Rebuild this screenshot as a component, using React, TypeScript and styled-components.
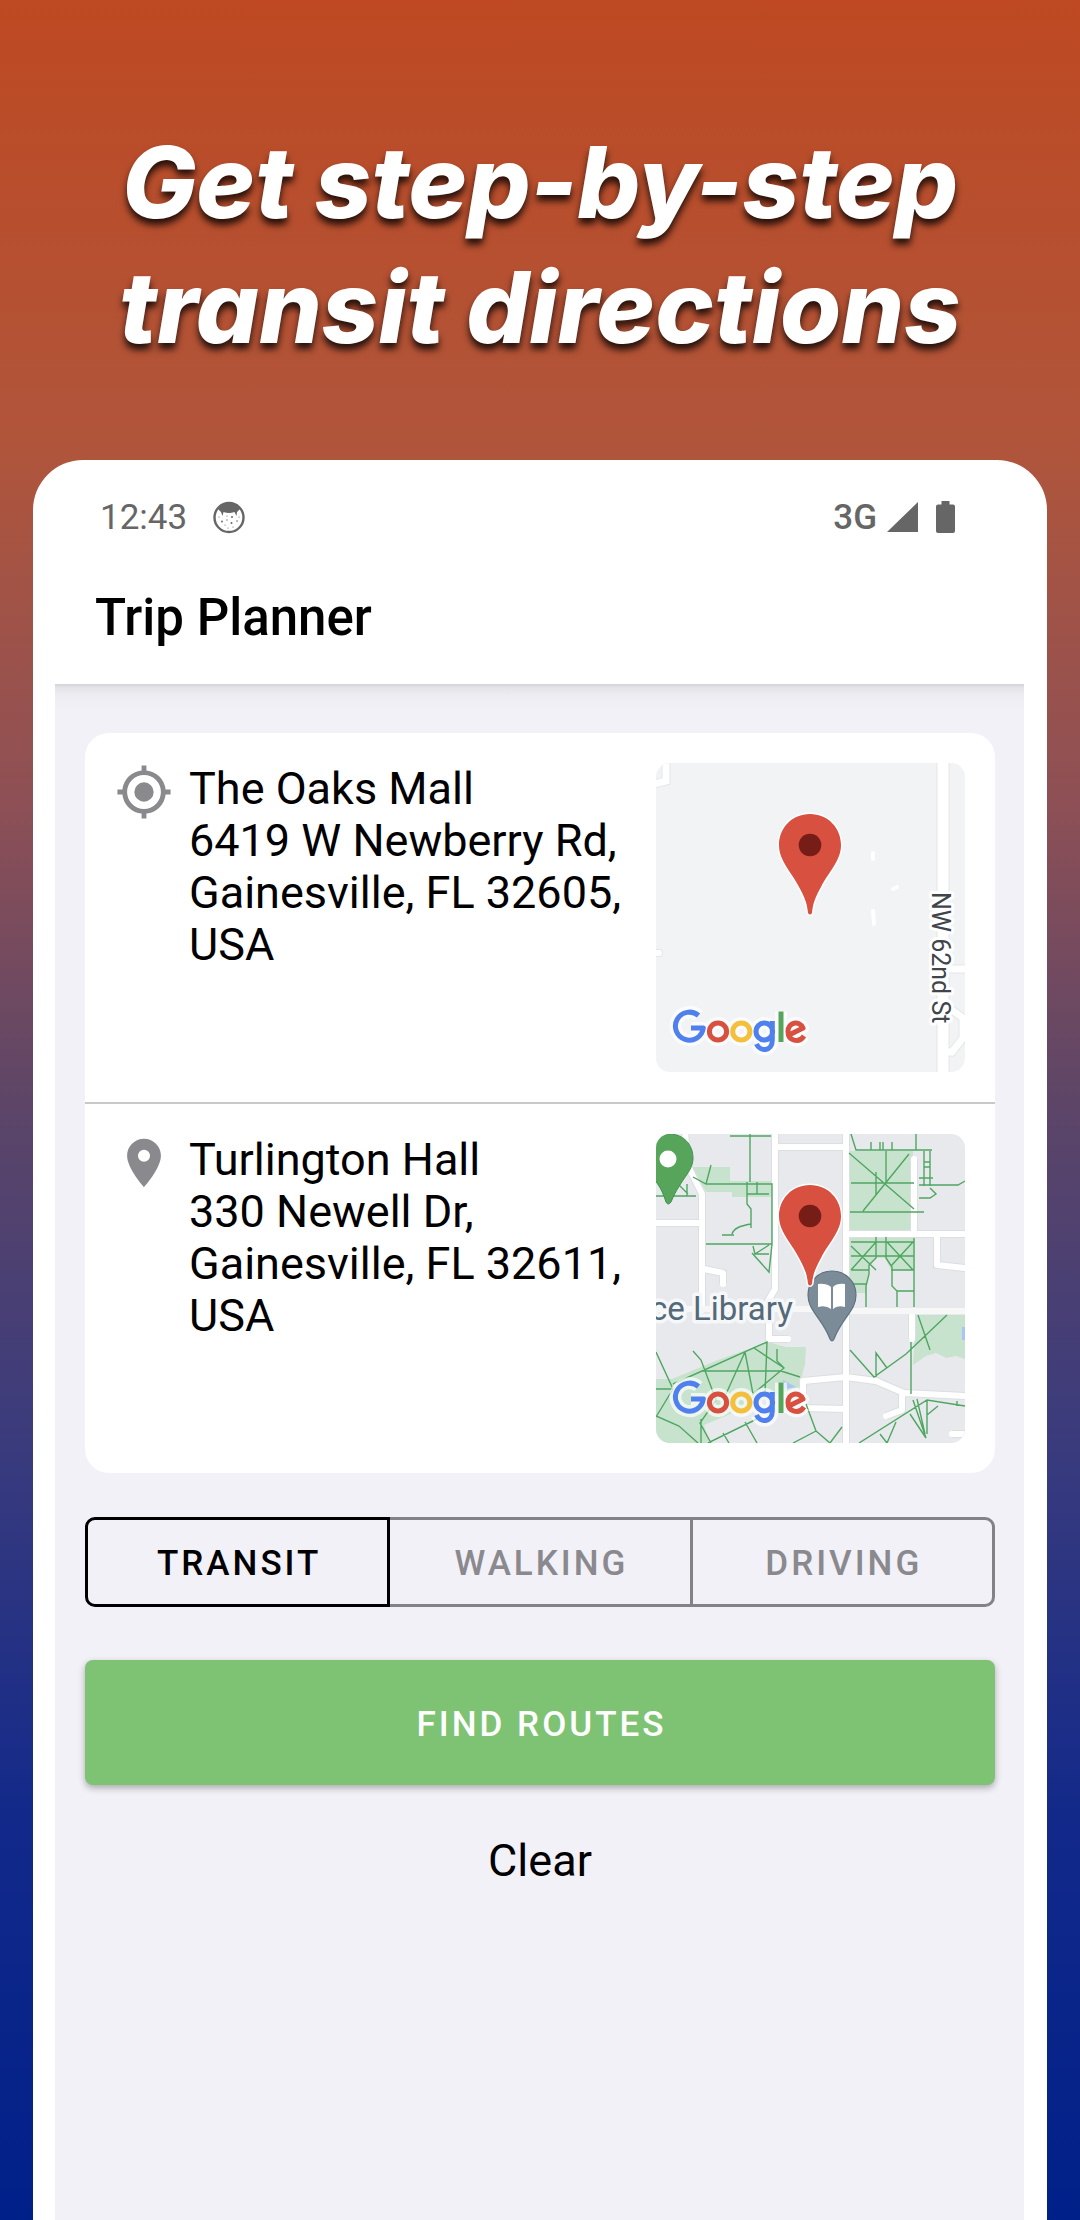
import React from "react";
import styled, { createGlobalStyle } from "styled-components";

const GlobalStyle = createGlobalStyle`
  * { box-sizing: border-box; }
  body { margin: 0; font-family: Roboto, "Liberation Sans", sans-serif; color: #000; }
  button { font: inherit; color: inherit; background: none; border: 0; padding: 0; margin: 0; cursor: pointer; }
`;

const Page = styled.div`
  min-height: 100vh;
  display: flex;
  flex-direction: column;
  background: linear-gradient(180deg, #be4922 0%, #b0553b 20%, #8e5055 36%, #5c4568 50%, #3a3b7d 65%, #12298a 82%, #002089 100%);
`;

const Headline = styled.h1`
  margin: 0;
  padding: 120px 32px 90px;
  font: italic 800 99px/125px Inter, "Liberation Sans", sans-serif;
  color: #fff;
  text-align: center;
  text-shadow: 0 6px 7px rgba(0, 0, 0, 0.8);
`;

const Phone = styled.main`
  flex: 1;
  display: flex;
  flex-direction: column;
  margin: 0 33px;
  border-radius: 50px 50px 0 0;
  background: #fff;
`;

const StatusBar = styled.div`
  display: flex;
  justify-content: space-between;
  align-items: center;
  height: 60px;
  margin: 27px 92px 0 67px;
  color: #666;
  font-size: 35px;
`;

const StatusGroup = styled.div<{ $gap: number }>`
  display: flex;
  align-items: center;
  gap: ${(p) => p.$gap}px;
`;

const Network = styled.span`
  font-weight: 500;
`;

const TitleBar = styled.header`
  padding: 43px 62px 38px;
`;

const Title = styled.h2`
  margin: 0;
  font-size: 51px;
  line-height: 56px;
  font-weight: 500;
`;

const Screen = styled.div`
  flex: 1;
  display: flex;
  flex-direction: column;
  margin: 0 23px 0 22px;
  padding: 49px 29px 49px 30px;
  background: linear-gradient(180deg, #d3d3d8 0, #e4e4e9 4px, #eeedf3 12px, #f2f1f7 28px);
`;

const Card = styled.section`
  border-radius: 24px;
  background: #fff;
`;

const Place = styled.div`
  display: flex;
  align-items: flex-start;
  padding: 30px;

  & + & { border-top: 2px solid #c8c8ca; }
`;

const PlaceIcon = styled.svg`
  flex: none;
  width: 58px;
  height: 58px;
  fill: #8a898e;
`;

const Address = styled.p`
  flex: 1;
  min-width: 0;
  margin: 0 20px 0 16px;
  font-size: 45px;
  line-height: 52px;
`;

const MapPicture = styled.svg`
  flex: none;
  width: 309px;
  height: 309px;
  border-radius: 14px;
`;

const Modes = styled.div`
  display: flex;
  margin-top: 44px;
`;

const Mode = styled.button<{ $active?: boolean }>`
  flex: 1;
  height: 90px;
  padding: 2px 0 0 3px;
  border: 3px solid ${(p) => (p.$active ? "#000" : "#838287")};
  color: ${(p) => (p.$active ? "#000" : "#8a898e")};
  font-size: 35px;
  font-weight: 500;
  letter-spacing: 3px;

  & + & { border-left: 0; }
  &:first-child { border-radius: 10px 0 0 10px; }
  &:last-child { border-radius: 0 10px 10px 0; }
`;

const FindButton = styled.button`
  height: 125px;
  margin-top: 53px;
  padding: 4px 0 0 3px;
  border-radius: 8px;
  background: #7ec373;
  box-shadow: 0 3px 7px rgba(0, 0, 0, 0.3);
  color: #fff;
  font-size: 35px;
  font-weight: 500;
  letter-spacing: 3px;
`;

const ClearButton = styled.button`
  align-self: center;
  margin-top: 50px;
  font-size: 45px;
  line-height: 52px;
`;

function FaceIcon() {
  return (
    <svg width="32" height="33" viewBox="0 0 32 33" aria-hidden="true">
      <circle cx="16" cy="16.500" r="14.500" fill="none" stroke="#666" strokeWidth="2.400" />
      <path d="M5 8 Q9 2 16 2 Q23 2 27 8 L24 11 L23.500 15 L21.500 11 Q16 13 10.500 11 L9.500 15 L8 11 Z" fill="#666" />
      <g fill="#666">
        <circle cx="9" cy="20.500" r=".9" /><circle cx="14" cy="19" r=".7" /><circle cx="18.500" cy="22" r="1" />
        <circle cx="24" cy="20" r=".8" /><circle cx="19" cy="16" r="1" /><circle cx="12" cy="24" r=".6" />
        <circle cx="20" cy="26" r=".6" /><circle cx="6" cy="16" r=".6" /><circle cx="26" cy="16" r=".6" />
        <circle cx="15" cy="27" r=".6" /><circle cx="14" cy="15" r=".6" />
      </g>
    </svg>
  );
}

function SignalIcon() {
  return (
    <svg width="31" height="32" viewBox="0 0 31 32" aria-hidden="true">
      <path d="M31 1 V31 H0 Z" fill="#666" />
    </svg>
  );
}

function BatteryIcon() {
  return (
    <svg width="19" height="32" viewBox="0 0 19 32" aria-hidden="true">
      <path d="M5.500 0 H13.500 V3.500 H17 Q19 3.500 19 5.500 V30 Q19 32 17 32 H2 Q0 32 0 30 V5.500 Q0 3.500 2 3.500 H5.500 Z" fill="#666" />
    </svg>
  );
}

function RedPin() {
  return (
    <g>
      <path
        d="M154 51 C136 51 123 65 123 82 C123 98 135 108 143 124 C149 135 151 140 152 150 Q154 153 156 150 C157 140 159 135 165 124 C173 108 185 98 185 82 C185 65 172 51 154 51 Z"
        fill="#d8503f" stroke="#fff" strokeWidth="3" paintOrder="stroke"
      />
      <circle cx="154" cy="82" r="11.300" fill="#761d17" />
    </g>
  );
}

const logoStrokes = [
  { color: "#4f80ee", d: "M42.500 252.500 A14 14 0 1 0 47.300 265 H35" },
  { color: "#d8503f", d: "M53.400 268.500 a8.600 8.600 0 1 0 17.200 0 a8.600 8.600 0 1 0 -17.200 0" },
  { color: "#f3bf3c", d: "M76.700 268.500 a8.600 8.600 0 1 0 17.200 0 a8.600 8.600 0 1 0 -17.200 0" },
  { color: "#4f80ee", d: "M100 268.500 a8.300 8.600 0 1 0 16.600 0 a8.300 8.600 0 1 0 -16.600 0 M116.300 258 V277 C116.300 289 104 289 100.500 281" },
  { color: "#57a55b", d: "M125 248.500 V279" },
  { color: "#d8503f", d: "M133 272 L147 265 C143 257 132 259 132 268.500 C132 278 143 280.500 148 273" },
];

function GoogleLogo() {
  return (
    <g fill="none" strokeLinejoin="round">
      <g stroke="#fff" strokeWidth="12" opacity=".7">
        {logoStrokes.map((s, i) => <path key={i} d={s.d} />)}
      </g>
      <g strokeWidth="5">
        {logoStrokes.map((s, i) => <path key={i} d={s.d} stroke={s.color} />)}
      </g>
    </g>
  );
}

function OaksMap() {
  return (
    <MapPicture viewBox="0 0 309 309" role="img" aria-label="Map of The Oaks Mall">
      <rect width="309" height="309" fill="#f1f3f5" />
      <g fill="none" stroke="#e4e6e8" strokeWidth="13">
        <path d="M287 0 V309" />
        <path d="M10 -5 V18 L-5 22 M290 206 H312 M293 245 L307 255 V275 L296 289 H288" strokeWidth="9" />
        <path d="M-2 190 H3" strokeWidth="8" strokeLinecap="round" />
      </g>
      <g fill="none" stroke="#fff" strokeWidth="11">
        <path d="M287 0 V309" />
        <path d="M10 -5 V18 L-5 22 M290 206 H312 M293 245 L307 255 V275 L296 289 H288" strokeWidth="7" />
        <path d="M-2 190 H3" strokeWidth="6" strokeLinecap="round" />
        <path d="M217 90 V96 M217 148 L218 161 M237 126 L241 124" strokeWidth="4" strokeLinecap="round" />
      </g>
      <text
        transform="translate(276 129) rotate(90)" fontFamily="Roboto, sans-serif" fontSize="25"
        fill="#40454b" stroke="#fff" strokeWidth="6" strokeLinejoin="round" paintOrder="stroke"
      >
        NW 62nd St
      </text>
      <RedPin />
      <GoogleLogo />
    </MapPicture>
  );
}

const roads = "M29 -5 L31 30 L46 60 V176 M0 89 H46 M48 135 L67 139 V150 M119 -5 V155 L108 174 M119 13 H190 M190 -5 V309 M190 100 H309 M258 25 V100 M281 102 V131 L309 134 M113 174 V205 H132 M256 178 V205 M190 243 L220 247 L248 259 L309 262 M190 243 L147 247 V274 L190 275 M246 260 V276 L230 282 M296 300 H309";
const paths = "M0 62 H40 M22 50 L32 60 M31 50 V62 M37 43 L50 50 H116 V110 L113 138 L96 119 M50 50 L55 31 M94 0 V48 M74 2 H115 M91 48 V70 L95 75 V94 M95 90 C84 92 78 94 76 100 M66 101 H78 M91 60 H113 M101 48 V60 M50 110 H116 M97 112 L99 120 H113 M99 120 L113 111 M195 0 L200 16 H276 M193 19 L258 75 M195 49 H258 M253 20 L207 77 M194 78 H268 M230 17 V48 M220 38 V62 M215 16 V8 M224 16 V8 M227 16 V8 M236 16 V8 M260 0 V16 M268 17 V52 M274 17 V52 M268 28 H274 M268 33 H274 M263 44 H277 M263 51 H302 L309 47 M274 54 L280 60 L274 64 H263 M195 108 H258 M195 122 H258 M195 136 H213 M235 136 H258 M195 112 L220 136 M195 136 L220 108 M231 108 L257 136 M257 108 L235 132 M220 103 V124 L213 131 V140 L210 152 V173 M230 103 V124 L236 133 V152 L241 157 V173 M241 157 H258 M258 104 V173 M195 150 H210 M291 181 L250 220 L218 243 L194 216 M220 243 V219 L231 234 M262 181 L274 216 M255 208 V260 M0 218 L17 255 L0 283 M17 250 L111 208 L109 260 M37 217 L45 226 L60 266 L44 289 L55 309 M46 237 H125 L144 243 M89 218 L70 260 M89 218 L97 260 L128 234 L121 227 V215 M98 214 L128 234 M0 255 H17 M0 282 L23 292 L42 309 M45 285 V309 M52 309 L105 283 M67 299 L73 309 M89 288 L101 309 M137 309 L160 297 L150 270 M160 297 L174 309 L186 293 M203 309 L271 266 L309 272 M224 300 L231 309 L240 288 M254 280 L270 304 L257 266 M261 265 L269 300 M271 266 V300 M271 281 L282 272 M301 267 V272";

function TurlingtonMap() {
  return (
    <MapPicture viewBox="0 0 309 309" role="img" aria-label="Map of Turlington Hall">
      <rect width="309" height="309" fill="#e8e9ed" />
      <g fill="#c8e3cd">
        <path d="M36 33 H74 V47 H115 V63 H76 V58 H50 Z M193 17 H257 V97 H193 Z M194 104 H259 V136 H235 L229 124 H220 L213 132 L210 159 H194 Z" />
        <path d="M260 181 H309 V225 L300 222 L290 224 L280 219 L270 222 L257 231 Z" />
        <path d="M0 245 H16 L62 226 L112 208 L130 213 H150 L149 230 L143 253 L98 270 L48 291 L54 309 H0 Z" />
      </g>
      <path d="M127 246 L140 253 L128 255 Z M306 193 H309 V206 H306 Z" fill="#a8c4fa" />
      <path d={roads} fill="none" stroke="#dcdee2" strokeWidth="8" />
      <path d={roads} fill="none" stroke="#fff" strokeWidth="6" strokeLinecap="round" strokeLinejoin="round" />
      <path d="M0 175 H190 M190 177 H309" stroke="#f7f7f8" strokeWidth="6" />
      <path d={paths} fill="none" stroke="#4fa661" strokeWidth="1.400" />
      <path d="M13 0 C28 0 37 11 37 24 C37 38 25 44 15 68 Q12 72 10 68 C5 52 0 48 -6 40 V8 Q2 0 13 0 Z" fill="#57a55b" stroke="#40914e" />
      <circle cx="12" cy="25" r="8.500" fill="#fff" />
      <text
        x="-6" y="186" fontFamily="Roboto, sans-serif" fontSize="33"
        fill="#546a79" stroke="#f6f7f9" strokeWidth="7" strokeLinejoin="round" paintOrder="stroke"
      >
        ce Library
      </text>
      <path d="M176 137 C190 137 200 148 200 161 C200 177 186 184 178 205 Q176 209 174 205 C166 184 152 177 152 161 C152 148 162 137 176 137 Z" fill="#7b8c98" stroke="#5d7382" strokeWidth="1.200" />
      <path d="M162 150 Q170 149 175 153 V175 Q170 171 162 173 Z M189 150 Q181 149 177 153 V175 Q181 171 189 173 Z" fill="#fff" />
      <RedPin />
      <GoogleLogo />
    </MapPicture>
  );
}

export default function App() {
  return (
    <Page>
      <GlobalStyle />
      <Headline>Get step-by-step<br />transit directions</Headline>
      <Phone>
        <StatusBar>
          <StatusGroup $gap={26}><span>12:43</span><FaceIcon /></StatusGroup>
          <StatusGroup $gap={18}>
            <StatusGroup $gap={10}><Network>3G</Network><SignalIcon /></StatusGroup>
            <BatteryIcon />
          </StatusGroup>
        </StatusBar>
        <TitleBar><Title>Trip Planner</Title></TitleBar>
        <Screen>
          <Card>
            <Place>
              <PlaceIcon viewBox="0 0 24 24" aria-hidden="true">
                <path d="M12 8a4 4 0 1 0 0 8 4 4 0 0 0 0-8zm8.940 3A8.990 8.990 0 0 0 13 3.060V1h-2v2.060A8.990 8.990 0 0 0 3.060 11H1v2h2.060A8.990 8.990 0 0 0 11 20.940V23h2v-2.060A8.990 8.990 0 0 0 20.940 13H23v-2h-2.060zM12 19a7 7 0 1 1 0-14 7 7 0 0 1 0 14z" />
              </PlaceIcon>
              <Address>The Oaks Mall<br />6419 W Newberry Rd, Gainesville, FL 32605, USA</Address>
              <OaksMap />
            </Place>
            <Place>
              <PlaceIcon viewBox="0 0 24 24" aria-hidden="true">
                <path d="M12 2C8.130 2 5 5.130 5 9c0 5.250 7 13 7 13s7-7.750 7-13c0-3.870-3.130-7-7-7zm0 9.500a2.500 2.500 0 0 1 0-5 2.500 2.500 0 0 1 0 5z" />
              </PlaceIcon>
              <Address>Turlington Hall<br />330 Newell Dr, Gainesville, FL 32611, USA</Address>
              <TurlingtonMap />
            </Place>
          </Card>
          <Modes>
            <Mode $active>TRANSIT</Mode>
            <Mode>WALKING</Mode>
            <Mode>DRIVING</Mode>
          </Modes>
          <FindButton>FIND ROUTES</FindButton>
          <ClearButton>Clear</ClearButton>
        </Screen>
      </Phone>
    </Page>
  );
}
